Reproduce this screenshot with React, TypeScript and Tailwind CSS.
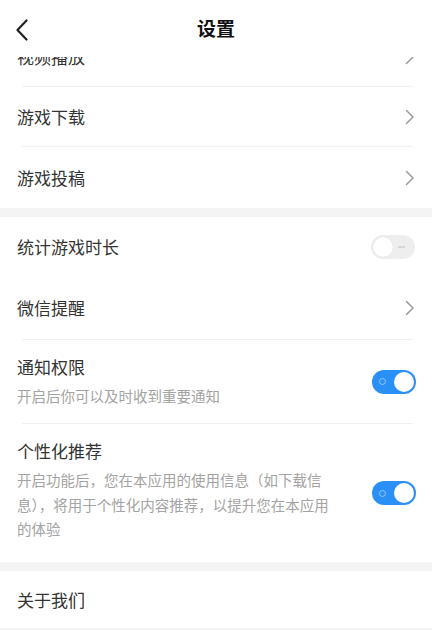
const font = { fontFamily: '"Noto Sans CJK SC", "Noto Sans", sans-serif' };

function Chevron() {
  return (
    <svg width="10" height="16" viewBox="0 0 10 16" className="shrink-0">
      <path d="M1.5 1.5 L8 8 L1.5 14.5" fill="none" stroke="#9a9a9a" strokeWidth="1.5" strokeLinecap="round" strokeLinejoin="round" />
    </svg>
  );
}

function Toggle({ on }: { on: boolean }) {
  if (on) {
    return (
      <div className="w-[44px] h-[24px] rounded-full bg-[#2a8ff7] shrink-0 flex items-center justify-between px-[2px]">
        <span className="ml-[5px] w-[7px] h-[7px] rounded-full border-[1.5px] border-[#93c6fa]" />
        <span className="w-[20px] h-[20px] rounded-full bg-white" />
      </div>
    );
  }
  return (
    <div className="w-[44px] h-[24px] rounded-full bg-[#eeeeee] shrink-0 flex items-center justify-between px-[2px]">
      <span className="w-[20px] h-[20px] rounded-full bg-white shadow-[0_0_1px_rgba(0,0,0,0.15)]" />
      <span className="mr-[8px] w-[7px] h-[1.5px] bg-[#d6d6d6]" />
    </div>
  );
}

function Line() {
  return <div className="ml-[22px] mr-[19px] h-px bg-[#f0f0f0]" />;
}

function Row({ title, right, line = true, h }: { title: string; right: React.ReactNode; line?: boolean; h: string }) {
  return (
    <div className="bg-white">
      <div className={`flex items-center justify-between px-[17px] ${h}`}>
        <span className="text-[17px] text-[#333333]">{title}</span>
        {right}
      </div>
      {line && <Line />}
    </div>
  );
}

function DescRow({ title, desc, line = true, h }: { title: string; desc: string; line?: boolean; h: string }) {
  return (
    <div className="bg-white">
      <div className={`flex items-center justify-between pl-[17px] pr-[16px] ${h}`}>
        <div className="flex flex-col w-[326px] self-start pt-[14px]">
          <span className="text-[17px] leading-[26px] text-[#333333]">{title}</span>
          <span className="text-[14.5px] leading-[24.5px] text-[#a3a3a3] mt-[4px]">{desc}</span>
        </div>
        <Toggle on />
      </div>
      {line && <Line />}
    </div>
  );
}

export default function App() {
  return (
    <div className="w-[432px] h-[630px] bg-white overflow-hidden flex flex-col" style={font}>
      <header className="h-[57px] shrink-0 flex items-center relative bg-white z-10">
        <svg width="14" height="22" viewBox="0 0 14 22" className="ml-[15px] mt-[2px]">
          <path d="M11.5 1.5 L2.5 11 L11.5 20.5" fill="none" stroke="#222" strokeWidth="2.2" strokeLinecap="round" strokeLinejoin="round" />
        </svg>
        <h1 className="absolute left-0 right-0 text-center text-[19px] font-bold text-[#111] pointer-events-none">设置</h1>
      </header>
      <div className="flex-1 overflow-hidden">
        <div className="-mt-[30px] flex flex-col">
          <Row title="视频播放" right={<Chevron />} h="h-[59px]" />
          <Row title="游戏下载" right={<Chevron />} h="h-[59px]" />
          <Row title="游戏投稿" right={<Chevron />} line={false} h="h-[61px]" />
          <div className="h-[9px] bg-[#f4f4f4]" />
          <Row title="统计游戏时长" right={<Toggle on={false} />} line={false} h="h-[60px]" />
          <Row title="微信提醒" right={<Chevron />} h="h-[62px]" />
          <DescRow title="通知权限" desc="开启后你可以及时收到重要通知" h="h-[83px]" />
          <DescRow title="个性化推荐" desc="开启功能后，您在本应用的使用信息（如下载信息），将用于个性化内容推荐，以提升您在本应用的体验" line={false} h="h-[138px]" />
          <div className="h-[9px] bg-[#f4f4f4]" />
          <Row title="关于我们" right={null} line={false} h="h-[57px]" />
          <div className="h-[9px] bg-[#f4f4f4]" />
        </div>
      </div>
    </div>
  );
}
